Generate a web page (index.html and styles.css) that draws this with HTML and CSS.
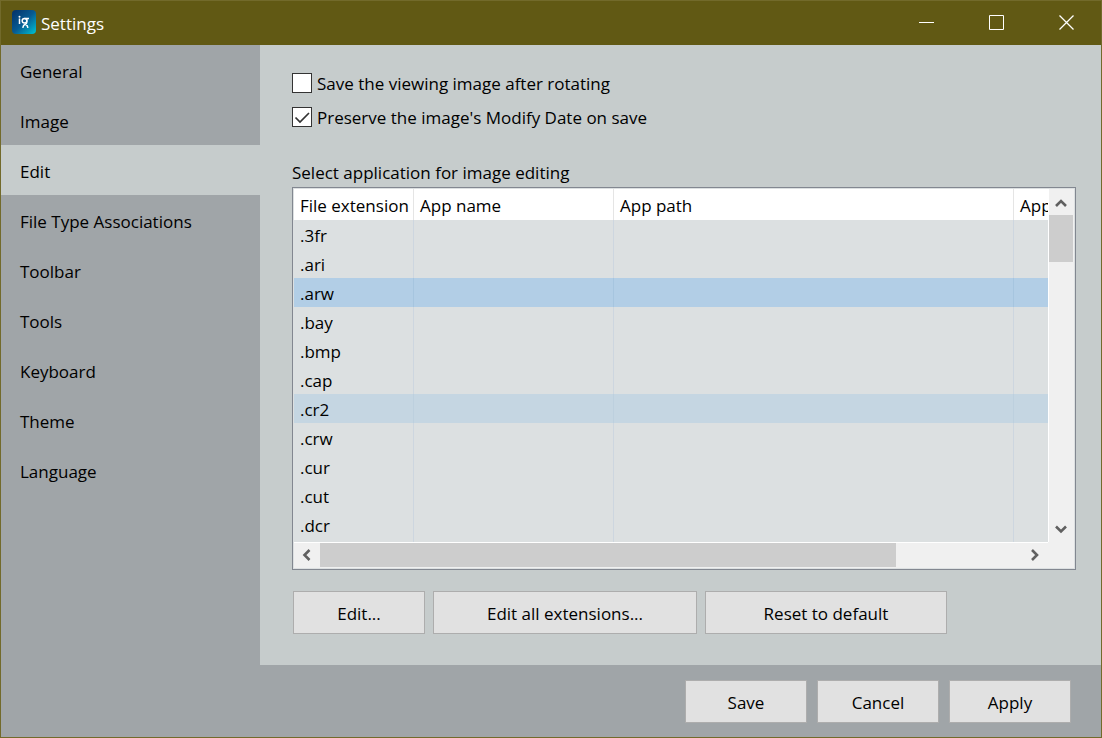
FILE: index.html
```html
<!DOCTYPE html>
<html lang="en">
<head>
<meta charset="utf-8">
<meta name="viewport" content="width=device-width, initial-scale=1">
<title>Settings</title>
<link rel="stylesheet" href="styles.css">
</head>
<body>
<div class="window">
  <header class="titlebar">
    <svg class="app-icon" viewBox="0 0 24 24" aria-hidden="true">
      <defs>
        <linearGradient id="icon-fill" x1="0" y1="0" x2="1" y2="1">
          <stop offset="0" stop-color="#043068"/>
          <stop offset="0.5" stop-color="#075a91"/>
          <stop offset="1" stop-color="#00c4d4"/>
        </linearGradient>
      </defs>
      <rect width="24" height="24" rx="4" fill="url(#icon-fill)"/>
      <g fill="none" stroke="#fff" stroke-width="1.500">
        <path d="M7.500 8.500v5.500"/>
        <circle cx="12.500" cy="10.800" r="2.300"/>
        <path d="M12.500 8.500h4.500M14.800 9v3c0 1.500-.7 2-1.500 2.300-1.400.5-2.300 1.700-2.500 3.500M13.300 14.300c1.500.6 2.400 1.700 2.600 3.500"/>
      </g>
      <circle cx="7.500" cy="6.700" r="1" fill="#fff"/>
    </svg>
    <h1 class="title">Settings</h1>
    <div class="window-controls">
      <button class="control" type="button" aria-label="Minimize"><svg viewBox="0 0 15 15"><path d="M0 7.500h15"/></svg></button>
      <button class="control" type="button" aria-label="Maximize"><svg viewBox="0 0 15 15"><path d="M.5.5h14v14H.5z"/></svg></button>
      <button class="control" type="button" aria-label="Close"><svg class="close" viewBox="0 0 15 15"><path d="M.5.5l14 14M14.500.5l-14 14"/></svg></button>
    </div>
  </header>
  <div class="body">
    <nav class="sidebar">
      <a class="tab" href="#general">General</a>
      <a class="tab" href="#image">Image</a>
      <a class="tab active" href="#edit" aria-current="page">Edit</a>
      <a class="tab" href="#file-types">File Type Associations</a>
      <a class="tab" href="#toolbar">Toolbar</a>
      <a class="tab" href="#tools">Tools</a>
      <a class="tab" href="#keyboard">Keyboard</a>
      <a class="tab" href="#theme">Theme</a>
      <a class="tab" href="#language">Language</a>
    </nav>
    <main class="content">
      <div class="options">
        <label class="option"><input class="check" type="checkbox">Save the viewing image after rotating</label>
        <label class="option"><input class="check" type="checkbox" checked>Preserve the image's Modify Date on save</label>
      </div>
      <p class="list-label" id="list-label">Select application for image editing</p>
      <div class="list">
        <div class="viewport">
          <table class="apps" aria-labelledby="list-label">
            <colgroup><col class="col-ext"><col class="col-name"><col class="col-path"><col class="col-args"></colgroup>
            <thead>
              <tr><th>File extension</th><th>App name</th><th>App path</th><th>App arguments</th></tr>
            </thead>
            <tbody>
              <tr><td>.3fr</td><td></td><td></td><td></td></tr>
              <tr><td>.ari</td><td></td><td></td><td></td></tr>
              <tr class="selected"><td>.arw</td><td></td><td></td><td></td></tr>
              <tr><td>.bay</td><td></td><td></td><td></td></tr>
              <tr><td>.bmp</td><td></td><td></td><td></td></tr>
              <tr><td>.cap</td><td></td><td></td><td></td></tr>
              <tr class="hovered"><td>.cr2</td><td></td><td></td><td></td></tr>
              <tr><td>.crw</td><td></td><td></td><td></td></tr>
              <tr><td>.cur</td><td></td><td></td><td></td></tr>
              <tr><td>.cut</td><td></td><td></td><td></td></tr>
              <tr class="last"><td>.dcr</td><td></td><td></td><td></td></tr>
            </tbody>
          </table>
        </div>
        <div class="scroll vertical">
          <button class="arrow" type="button" aria-label="Scroll up"><svg viewBox="0 0 12 12"><path d="M1 10l5-5 5 5"/></svg></button>
          <div class="track"><div class="thumb"></div></div>
          <button class="arrow" type="button" aria-label="Scroll down"><svg viewBox="0 0 12 12"><path d="M1 3.500l5 5 5-5"/></svg></button>
        </div>
        <div class="scroll horizontal">
          <button class="arrow" type="button" aria-label="Scroll left"><svg viewBox="0 0 12 12"><path d="M8.500 1l-5 5 5 5"/></svg></button>
          <div class="track"><div class="thumb"></div></div>
          <button class="arrow" type="button" aria-label="Scroll right"><svg viewBox="0 0 12 12"><path d="M3 1l5 5-5 5"/></svg></button>
        </div>
        <div class="corner"></div>
      </div>
      <div class="actions">
        <button class="button edit" type="button">Edit...</button>
        <button class="button edit-all" type="button">Edit all extensions...</button>
        <button class="button reset" type="button">Reset to default</button>
      </div>
    </main>
  </div>
  <footer class="footer">
    <button class="button" type="button">Save</button>
    <button class="button" type="button">Cancel</button>
    <button class="button" type="button">Apply</button>
  </footer>
</div>
</body>
</html>
```
FILE: styles.css
```css
* {
  box-sizing: border-box;
}

body {
  margin: 0;
  font: 17px/24px "Segoe UI", "Open Sans", "Noto Sans", sans-serif;
  color: #000;
}

button {
  font: inherit;
  color: inherit;
  padding: 0;
}

.window {
  display: flex;
  flex-direction: column;
  min-height: 100vh;
  border: 1px solid #726a2b;
  background: #a0a5a8;
}

.titlebar {
  display: flex;
  align-items: center;
  height: 44px;
  padding-left: 11px;
  background: #615914;
  color: #fff;
}

.app-icon {
  width: 24px;
  height: 24px;
  margin: 0 5px 2px 0;
}

.title {
  margin: 0;
  padding-top: 2px;
  font-size: 17px;
  font-weight: 400;
}

.window-controls {
  display: flex;
  align-self: stretch;
  margin-left: auto;
}

.control {
  display: grid;
  place-items: center;
  width: 70px;
  padding-bottom: 1px;
  border: 0;
  background: none;
}

.control svg {
  width: 15px;
  height: 15px;
  fill: none;
  stroke: #fff;
}

.control .close {
  stroke-width: 1.3;
}

.body {
  display: flex;
  flex: 1;
}

.sidebar {
  width: 259px;
  flex: none;
}

.tab {
  display: block;
  padding: 15px 19px 11px;
  color: inherit;
  text-decoration: none;
}

.tab.active,
.content {
  background: #c6cccc;
}

.content {
  display: flex;
  flex-direction: column;
  flex: 1;
  min-width: 0;
  padding: 27px 25px 31px 32px;
}

.options {
  display: grid;
  justify-items: start;
  gap: 10px;
}

.option {
  display: flex;
  align-items: flex-start;
  gap: 5px;
}

.check {
  appearance: none;
  width: 20px;
  height: 20px;
  margin: 1px 0 0;
  border: 1px solid #333;
  background: #fff;
}

.check:checked {
  background: #fff url("data:image/svg+xml,%3Csvg xmlns='http://www.w3.org/2000/svg' viewBox='0 0 18 18'%3E%3Cpath d='M2.500 9.500l4.500 4.500 9-9' fill='none' stroke='%23333' stroke-width='1.700'/%3E%3C/svg%3E");
}

.list-label {
  margin: 31px 0 2px;
}

.list {
  display: grid;
  grid-template-columns: minmax(0, 1fr) 26px;
  grid-template-rows: minmax(0, 1fr) 26px;
  flex: 1;
  border: 1px solid #828790;
  padding: 1px;
  background: #dce0e1;
}

.viewport {
  height: 353px;
  overflow: hidden;
}

.apps {
  width: 920px;
  table-layout: fixed;
  border-collapse: separate;
  border-spacing: 0;
}

.col-ext {
  width: 120px;
}

.col-name,
.col-args {
  width: 200px;
}

.col-path {
  width: 400px;
}

.apps th,
.apps td {
  height: 29px;
  padding: 2px 6px 0;
  border-right: 1px solid #cdd6df;
  text-align: left;
  font-weight: 400;
  line-height: 27px;
  white-space: nowrap;
}

.apps th {
  height: 31px;
  border-color: #e5e5e5;
  background: #fff;
}

.apps .last td {
  height: 32px;
  vertical-align: top;
}

.selected {
  background: #b2cee6;
}

.hovered {
  background: #c5d6e2;
}

.apps .selected td {
  border-color: #a6c5df;
}

.apps .hovered td {
  border-color: #bdd0de;
}

.scroll {
  display: flex;
  background: #f0f0f0;
}

.vertical {
  flex-direction: column;
  border-left: 1px solid #fff;
  border-right: 1px solid #f0f0f0;
}

.horizontal {
  border-top: 1px solid #fff;
  border-bottom: 1px solid #f0f0f0;
}

.corner {
  background: #f0f0f0;
}

.track {
  flex: 1;
}

.arrow {
  display: grid;
  place-items: center;
  flex: none;
  width: 26px;
  height: 24px;
  border: 0;
  background: none;
}

.vertical .arrow {
  width: 24px;
  height: 26px;
}

.arrow svg {
  width: 12px;
  height: 12px;
  fill: none;
  stroke: #606060;
  stroke-width: 2.6;
}

.thumb {
  background: #cdcdcd;
}

.vertical .thumb {
  height: 47px;
}

.horizontal .thumb {
  width: 82%;
  height: 100%;
}

.actions {
  display: flex;
  gap: 8px;
  padding: 21px 1px 0;
}

.button {
  width: 122px;
  height: 43px;
  padding-top: 2px;
  border: 1px solid #adadad;
  background: #e1e1e1;
}

.edit {
  width: 132px;
}

.edit-all {
  width: 264px;
}

.reset {
  width: 242px;
}

.footer {
  display: flex;
  justify-content: flex-end;
  gap: 10px;
  padding: 15px 30px 14px;
}
```
